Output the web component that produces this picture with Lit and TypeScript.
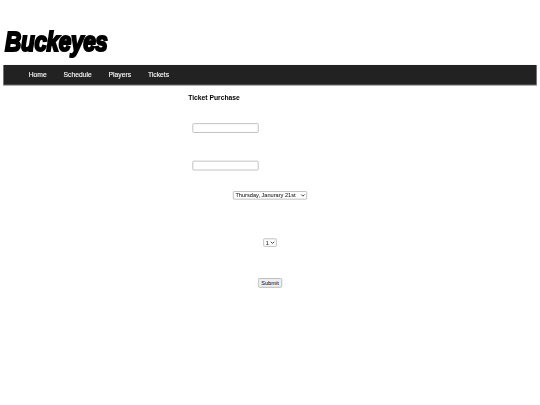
import { LitElement, html, css } from "lit";
import { customElement } from "lit/decorators.js";

@customElement("app-root")
export class AppRoot extends LitElement {
  static styles = css`
    :host { display: block; width: 540px; height: 405px; background: #fff; overflow: hidden; }
    .page { width: 1280px; height: 960px; padding: 0 8px; box-sizing: border-box; transform: scale(0.421875); transform-origin: 0 0; font-family: "Liberation Sans", Arial, sans-serif; font-size: 16px; color: #000; }
    .brand { height: 154px; padding-top: 65px; box-sizing: border-box; }
    .logo { margin: 0 0 0 4px; font-size: 72px; line-height: 72px; font-weight: 700; font-style: italic; letter-spacing: -1px; -webkit-text-stroke: 5.5px #000; transform: scale(0.74, 0.93); transform-origin: left top; width: max-content; }
    nav { height: 47px; background: #222; border-bottom: 2px solid #d0d0d0; display: flex; align-items: center; padding-left: 40px; color: #fff; -webkit-text-stroke: 0.25px #fff; }
    nav span { padding: 0 20px; }
    main { padding-top: 20px; }
    h2 { margin: 0 0 0 438px; font-size: 16px; line-height: 18px; font-weight: 700; }
    form { margin: 0; }
    .row { display: flex; }
    .left { padding-left: 448px; }
    .center { justify-content: center; }
    .in1 { margin-top: 51px; }
    .in2 { margin-top: 66px; }
    .sel1 { margin-top: 49px; }
    .sel2 { margin-top: 92px; }
    .sub { margin-top: 74px; }
    input { box-sizing: border-box; width: 157px; height: 23px; margin: 0; border: 2px solid #b8b8b8; border-radius: 3px; background: #fff; }
    select { box-sizing: border-box; height: 20px; margin: 0; border: 2px solid #b4b4b4; border-radius: 3px; background: #fff; color: #222; font: 13.33px "Liberation Sans", Arial, sans-serif; -webkit-text-stroke: 0.12px #222; }
    .date { width: 176px; }
    .qty { width: 32px; }
    button { box-sizing: border-box; width: 58px; height: 23px; margin: 0; padding: 0; border: 2px solid #b0b0b0; border-radius: 4px; background: #efefef; color: #222; font: 13.33px "Liberation Sans", Arial, sans-serif; -webkit-text-stroke: 0.12px #222; }
  `;

  render() {
    return html`
      <div class="page">
        <header class="brand"><h1 class="logo">Buckeyes</h1></header>
        <nav>
          <span>Home</span><span>Schedule</span><span>Players</span><span>Tickets</span>
        </nav>
        <main>
          <h2>Ticket Purchase</h2>
          <form @submit=${(e: Event) => e.preventDefault()}>
            <div class="row left in1"><input type="text" /></div>
            <div class="row left in2"><input type="text" /></div>
            <div class="row center sel1">
              <select class="date"><option>Thursday, Janurary 21st</option></select>
            </div>
            <div class="row center sel2">
              <select class="qty"><option>1</option></select>
            </div>
            <div class="row center sub"><button type="submit">Submit</button></div>
          </form>
        </main>
      </div>
    `;
  }
}
